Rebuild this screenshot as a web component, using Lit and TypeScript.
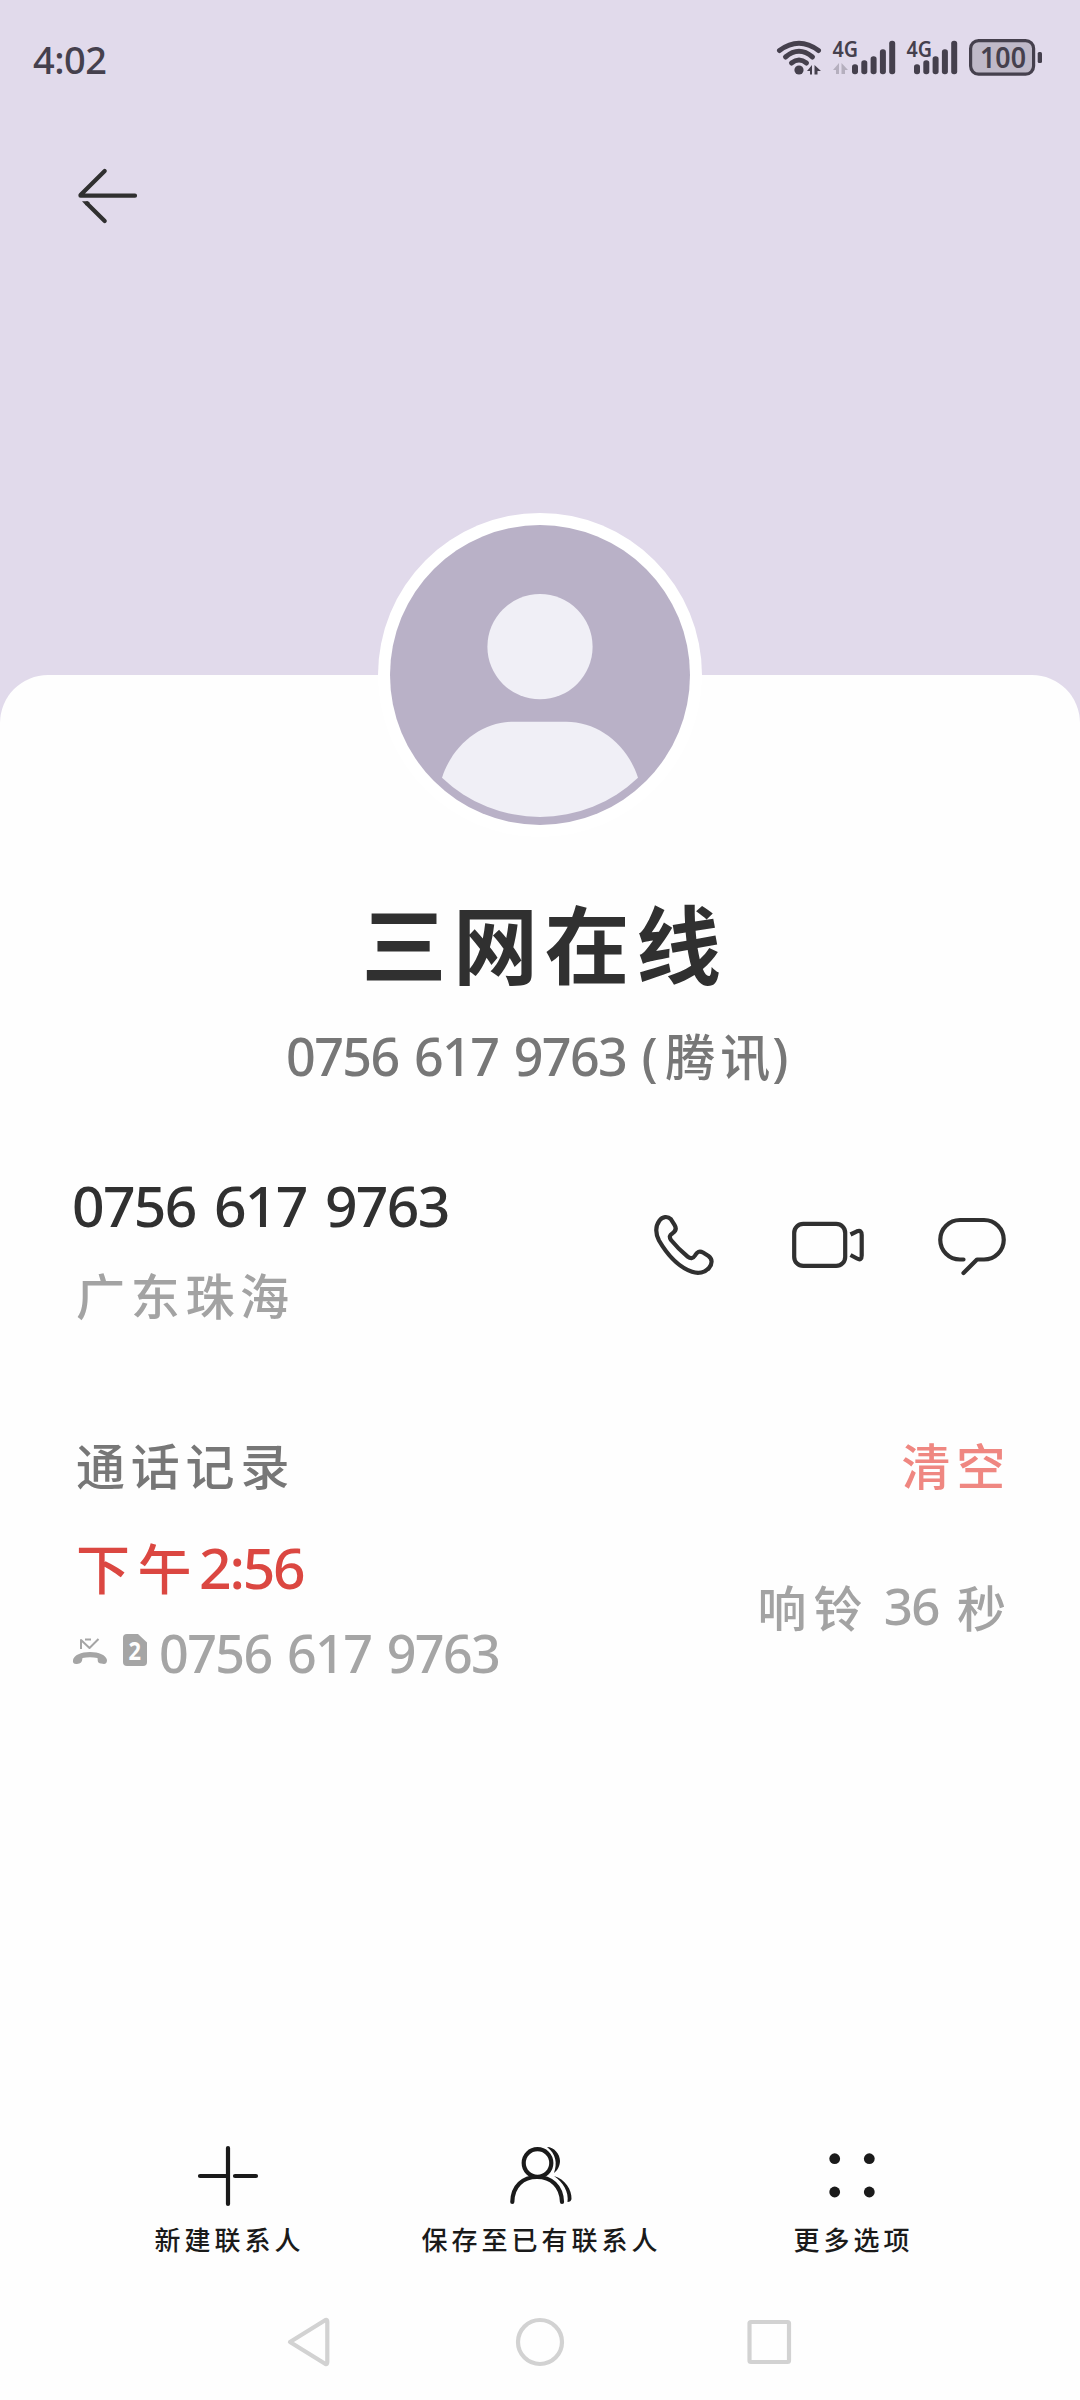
import { LitElement, html, svg, css } from "lit";
import { customElement } from "lit/decorators.js";

const bars = (x: number, heights: number[]) =>
  heights.map((h, i) => svg`<rect x=${x + i * 9.3} y=${74.3 - h} width="6" height=${h} rx="2.8"/>`);

@customElement("status-bar")
export class StatusBar extends LitElement {
  static styles = css`
    :host { display: flex; justify-content: space-between; height: 120px; color: #45404d; fill: currentColor; }
    .time { padding: 29px 0 0 33px; font: 500 38px/60px "Noto Sans", sans-serif; letter-spacing: -0.500px; }
    .wire { fill: none; stroke: currentColor; stroke-width: 5; stroke-linecap: round; }
    .faint { fill: #b5afbe; }
    .net { font: 600 22px "Noto Sans", sans-serif; }
    .level { font: 600 28px "Noto Sans", sans-serif; }
    .cell { fill: #bfb9c8; stroke: currentColor; stroke-width: 3.2; }
    svg { display: block; }
  `;
  render() {
    return html`
      <div class="time">4:02</div>
      <svg width="310" height="120" viewBox="770 0 310 120">
        <path class="wire" d="M779.500 50.500Q799 36 818.500 50.500M785.500 57Q799 45.500 812.500 57M791.500 63Q799 57 806.500 63"/>
        <circle cx="799" cy="70" r="4.600"/>
        <path d="M807 71L812 65V74.500H810V71ZM814.500 65L821 71H817.500V74.500H814.500Z"/>
        <text class="net" x="832.500" y="57" textLength="25.500" lengthAdjust="spacingAndGlyphs">4G</text>
        <path class="faint" d="M833 70L839 63V74H836V70ZM841.500 63L848 70H845V74H841.500Z"/>
        ${bars(852, [10, 14, 18, 25, 33.500])}
        <text class="net" x="906.500" y="57" textLength="25.500" lengthAdjust="spacingAndGlyphs">4G</text>
        ${bars(914, [10, 14, 18, 25, 33.500])}
        <rect class="cell" x="970.600" y="40.600" width="63" height="33.500" rx="8"/>
        <text class="level" x="980" y="67.500" textLength="46" lengthAdjust="spacingAndGlyphs">100</text>
        <rect x="1037.700" y="52" width="4.300" height="11" rx="1.500"/>
      </svg>
    `;
  }
}

@customElement("contact-avatar")
export class ContactAvatar extends LitElement {
  static styles = css`
    :host { display: block; }
    svg { display: block; }
    .ring { fill: #fff; }
    .disc { fill: #b9b1c7; }
    .person { fill: #f0eff6; }
  `;
  render() {
    return html`
      <svg width="324" height="324" viewBox="378 513 324 324">
        <circle class="ring" cx="540" cy="675" r="162"/>
        <circle class="disc" cx="540" cy="675" r="150"/>
        <circle class="person" cx="540" cy="646.700" r="52.600"/>
        <path class="person" d="M442 777.700C453 744 482 721.700 514 721.700H566C598 721.700 627 744 638 777.700A142 142 0 0 1 442 777.700Z"/>
      </svg>
    `;
  }
}

@customElement("app-root")
export class AppRoot extends LitElement {
  static styles = css`
    :host {
      display: flex; flex-direction: column; width: 1080px; height: 2400px; overflow: hidden;
      background: #e1daeb; color: #303030;
      font-family: "Noto Sans CJK SC", sans-serif;
    }
    svg { display: block; flex: none; }
    .line { fill: none; stroke: currentColor; stroke-width: 4.200; stroke-linecap: round; stroke-linejoin: round; }
    .thin { stroke-width: 2; }
    .flat { stroke-linecap: butt; }
    .num { font-family: "Noto Sans", sans-serif; }
    .top { height: 555px; flex: none; }
    .back { padding: 40px 0 0 68px; }
    .sheet {
      position: relative; flex: 1; display: flex; flex-direction: column;
      background: #fefefe; border-radius: 48px 48px 0 0;
    }
    .avatar { position: absolute; left: 378px; top: -162px; }
    .name {
      padding: 216px 0 0 3px; text-align: center; font-weight: 700; font-size: 85px;
      line-height: 100px; letter-spacing: 6.500px; margin-right: -6px;
    }
    .sub {
      display: flex; padding-left: 286px; margin-top: 30px; height: 70px; line-height: 70px;
      color: #777; font-size: 50px; white-space: pre; font-weight: 500;
    }
    .sub .num, .entry .num { font-size: 52px; letter-spacing: -1.600px; word-spacing: 3.400px; font-weight: 500; }
    .carrier { letter-spacing: 5px; margin: -2px -3px 0 9px; }
    .contact { display: flex; justify-content: space-between; margin-top: 68px; padding: 0 69px 0 72px; }
    .big { font: 500 57px/92px "Noto Sans", sans-serif; letter-spacing: -1.700px; word-spacing: 5.200px; }
    .place { padding-left: 4px; font-size: 49px; line-height: 86px; letter-spacing: 5.700px; color: #a3a3a3; font-weight: 500; }
    .acts { display: flex; align-items: center; gap: 68px; }
    .head { display: flex; justify-content: space-between; margin-top: 87px; padding: 0 71px 0 76px; font-size: 49px; line-height: 80px; font-weight: 500; letter-spacing: 5.800px; color: #777; }
    .clear { color: #ef8781; margin-right: -2px; }
    .log { display: flex; justify-content: space-between; align-items: center; height: 170px; margin-top: 25px; padding: 0 74px 0 71px; }
    .when { display: flex; height: 76px; line-height: 76px; padding-left: 5px; font-size: 54px; font-weight: 500; letter-spacing: 7.500px; color: #db4741; }
    .when .num { font-size: 57px; letter-spacing: -2.200px; font-weight: 500; }
    .entry { display: flex; align-items: center; height: 94px; color: #a5a5a5; }
    .ring { display: flex; gap: 18px; padding-bottom: 18px; font-size: 49px; letter-spacing: 7px; color: #a3a3a3; font-weight: 500; }
    .ring .num { font-size: 51px; letter-spacing: -1.500px; margin-left: -4px; }
    .secs { letter-spacing: 0; }
    .solid { fill: currentColor; }
    .knock { fill: #fefefe; font: 700 25px "Noto Sans", sans-serif; }
    .foot { display: grid; grid-template-columns: 456px 168px 456px; margin-top: auto; color: #1a1a1a; justify-items: center; }
    .item { display: flex; flex-direction: column; align-items: center; font-size: 26px; line-height: 46px; letter-spacing: 4px; white-space: nowrap; font-weight: 500; }
    .item span { padding-left: 3px; }
    .nav { display: flex; justify-content: center; margin-top: 38px; padding-bottom: 20px; color: #d2d2d2; }
  `;
  render() {
    return html`
      <status-bar></status-bar>
      <div class="top">
        <div class="back">
          <svg width="80" height="70" viewBox="68 160 80 70">
            <path class="line" d="M80.500 195.700H135M80.500 195L104.700 171"/>
            <path class="line" d="M87 203.500L104.700 221"/>
            <path class="solid" d="M82 201.300H88L90 203L86 205.500Z"/>
          </svg>
        </div>
      </div>
      <main class="sheet">
        <contact-avatar class="avatar"></contact-avatar>
        <div class="name">三网在线</div>
        <div class="sub"><span class="num">0756 617 9763 (</span><span class="carrier">腾讯</span><span class="num">)</span></div>
        <section class="contact">
          <div>
            <div class="big">0756 617 9763</div>
            <div class="place">广东珠海</div>
          </div>
          <div class="acts">
            <svg width="70" height="80" viewBox="649 1209 70 80">
              <path class="line" d="M671 1220.300C667.500 1216.700 662.500 1217.500 659.500 1221.500C655.500 1227 655.500 1234.500 659 1241.500C668 1257 680 1268.500 692 1272.800C698.500 1275 705 1273.500 709 1269C712.500 1264.500 712.500 1260 708.500 1257L703 1253.500C699.500 1251.500 697 1252.800 695 1256.500C693 1259.800 690.500 1259.800 687.500 1257.500C680 1251.500 675.500 1246.500 671 1241C669 1238 669.500 1236 672.500 1234.300C676 1232 676.500 1229 674.500 1225.800Z"/>
            </svg>
            <svg width="80" height="80" viewBox="787 1209 80 80">
              <rect class="line" x="794.200" y="1224.900" width="51" height="42" rx="9"/>
              <path class="line flat" d="M850.500 1235.500L857 1232.300Q861.700 1230.500 861.700 1236V1256.500Q861.700 1262 857 1259.500L850.500 1256"/>
            </svg>
            <svg width="76" height="80" viewBox="935 1209 76 80">
              <path class="line" d="M963.500 1260.500H960A19.700 19.700 0 0 1 960 1221H984A19.700 19.700 0 0 1 984 1260.500H977L963.500 1274"/>
            </svg>
          </div>
        </section>
        <section class="head"><span>通话记录</span><span class="clear">清空</span></section>
        <section class="log">
          <div>
            <div class="when">下午<span class="num">2:56</span></div>
            <div class="entry">
              <svg width="88" height="44" viewBox="71 1631 88 44">
                <path class="line flat thin" d="M81 1650V1641L89.500 1649L98.500 1640M85 1640.500H91"/>
                <path class="solid" d="M73 1661C74 1656 81 1653 90 1653S106 1656 107 1661C107 1665 105 1665.500 101 1664.500C97 1664 98 1661.500 97.500 1659Q90 1657.500 82.500 1659C82 1662 82 1664 78 1664.800C74 1665.500 72.500 1664 73 1661Z"/>
                <path class="solid" d="M127 1635H138L147 1643.500V1663Q147 1667 143 1667H127Q123 1667 123 1663V1639Q123 1635 127 1635Z"/>
                <text class="knock" x="128.500" y="1661" textLength="12.500" lengthAdjust="spacingAndGlyphs">2</text>
              </svg>
              <span class="num">0756 617 9763</span>
            </div>
          </div>
          <div class="ring"><span>响铃</span><span class="num">36</span><span class="secs">秒</span></div>
        </section>
        <footer class="foot">
          <div class="item">
            <svg width="80" height="80" viewBox="188 2136 80 80">
              <path class="line" d="M228 2148V2204M200 2176H227M256 2176H235"/>
            </svg>
            <span>新建联系人</span>
          </div>
          <div class="item">
            <svg width="80" height="80" viewBox="500 2136 80 80">
              <circle class="line" cx="537.500" cy="2163" r="13.800"/>
              <path class="line" d="M512.300 2202C512.500 2186 523 2177 537 2177S561.500 2186 562 2202"/>
              <path class="solid" d="M547 2147C554 2147 560 2154 560 2161C560 2166 557 2171 554 2173C557.500 2163 556 2154 547 2147ZM554 2176C565 2179 572 2190 571.500 2199Q571 2202 567.500 2202C569 2192 563 2182 554 2176Z"/>
            </svg>
            <span>保存至已有联系人</span>
          </div>
          <div class="item">
            <svg width="80" height="80" viewBox="812 2136 80 80">
              <g class="solid"><circle cx="834.700" cy="2158.700" r="5.400"/><circle cx="869.300" cy="2158.700" r="5.400"/><circle cx="834.700" cy="2192" r="5.400"/><circle cx="869.300" cy="2192" r="5.400"/></g>
            </svg>
            <span>更多选项</span>
          </div>
        </footer>
        <nav class="nav">
          <svg width="540" height="80" viewBox="270 2300 540 80">
            <path class="line" d="M290 2342L325.500 2320Q327.300 2319.500 327.300 2322V2362Q327.300 2364.500 325.500 2364Z"/>
            <circle class="line" cx="540" cy="2342" r="22"/>
            <rect class="line" x="749.500" y="2322" width="39.500" height="40" rx="1.500"/>
          </svg>
        </nav>
      </main>
    `;
  }
}
